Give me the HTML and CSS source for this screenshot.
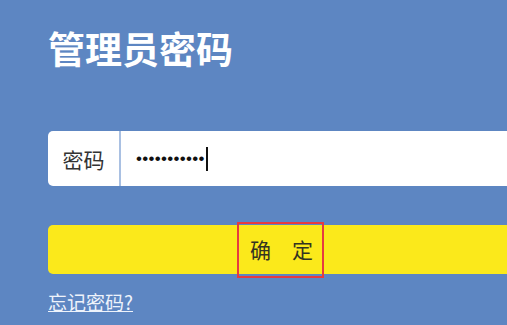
FILE: index.html
```html
<!DOCTYPE html>
<html lang="zh-CN">
<head>
<meta charset="utf-8">
<title>管理员密码</title>
<link rel="stylesheet" href="styles.css">
</head>
<body>
<div class="page">
  <h1 class="title">管理员密码</h1>
  <div class="field">
    <div class="field-label">密码</div>
    <div class="field-input"><span class="dots">•••••••••••</span><span class="caret"></span></div>
  </div>
  <div class="btn"><span class="btn-text">确　定</span></div>
  <a class="forgot" href="#">忘记密码?</a>
</div>
</body>
</html>
```

FILE: styles.css
```css
html, body {
  margin: 0;
  padding: 0;
  background: #5d86c2;
  overflow: hidden;
  font-family: "Noto Sans CJK SC", "Noto Sans", sans-serif;
}
.page {
  width: 467px;
  padding: 26px 0 0 48px;
}
.title {
  margin: 0;
  color: #ffffff;
  font-size: 37px;
  font-weight: 700;
  line-height: 44px;
}
.field {
  margin-top: 61px;
  height: 55px;
  display: flex;
  background: #ffffff;
  border-radius: 5px 0 0 5px;
}
.field-label {
  width: 71px;
  border-right: 2px solid #a9c0e2;
  display: flex;
  align-items: center;
  justify-content: center;
  font-size: 21px;
  color: #333333;
}
.field-input {
  flex: 1;
  display: flex;
  align-items: center;
  padding-left: 15px;
}
.dots {
  font-family: "Liberation Sans", sans-serif;
  font-size: 17px;
  color: #111111;
  letter-spacing: 0.3px;
}
.caret {
  width: 2px;
  height: 24px;
  background: #111111;
  margin-left: 1px;
}
.btn {
  margin-top: 39px;
  height: 49px;
  background: #fbe91b;
  border-radius: 5px 0 0 5px;
  display: flex;
  align-items: center;
  justify-content: center;
}
.btn-text {
  position: relative;
  font-size: 21px;
  color: #333322;
  line-height: 49px;
}
.btn-text::after {
  content: "";
  position: absolute;
  left: -13px;
  right: -11px;
  top: -3px;
  bottom: -4px;
  border: 2px solid #e63a40;
}
.forgot {
  display: inline-block;
  margin-top: 15px;
  font-size: 19px;
  color: #eef3fb;
  text-decoration: underline;
  line-height: 25px;
}
```
